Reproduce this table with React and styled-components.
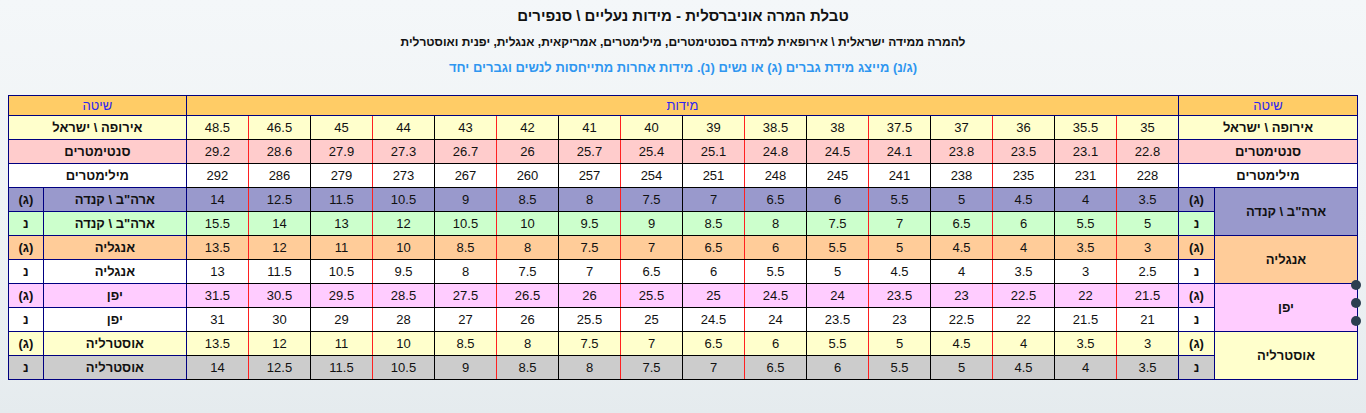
import React from "react"
import styled, { createGlobalStyle } from "styled-components"

const GlobalStyle = createGlobalStyle`
  html, body {
    margin: 0;
    padding: 0;
  }
  body {
    background: linear-gradient(180deg, #f4f7f9 0%, #eef2f4 60%, #e5ebee 100%);
    min-height: 413px;
    font-family: "Liberation Sans", Arial, sans-serif;
  }
`

const Page = styled.div`
  direction: rtl;
  padding: 6px 8px 0 8px;
  height: 407px;
  overflow: hidden;
`

const Title = styled.h1`
  margin: 0;
  font-size: 15px;
  line-height: 19px;
  font-weight: bold;
  text-align: center;
  color: #111;
`

const Subtitle = styled.p`
  margin: 8px 0 0;
  font-size: 12px;
  line-height: 18px;
  font-weight: bold;
  text-align: center;
  color: #111;
`

const Note = styled.p`
  margin: 8px 0 0;
  font-size: 13px;
  line-height: 18px;
  font-weight: bold;
  text-align: center;
  color: #2f96f0;
`

const Table = styled.table`
  margin-top: 18px;
  width: 1349px;
  border-collapse: collapse;
  table-layout: fixed;
  border: 1px solid #000080;
`

const Row = styled.tr`
  height: 24px;
  background: ${p => p.$bg || "#ffffff"};
`

const HeadRow = styled.tr`
  height: 20px;
  background: #ffcc66;
`

const HeadCell = styled.th`
  border: 1px solid #000080;
  padding: 0;
  font-size: 13px;
  font-weight: normal;
  color: #2b24f2;
  text-align: center;
`

const Label = styled.td`
  border: 1px solid #000080;
  padding: 0;
  font-size: 13px;
  font-weight: bold;
  color: #111;
  text-align: center;
  background: ${p => p.$bg || "transparent"};
`

const Gender = styled.td`
  border: 1px solid #000080;
  padding: 0;
  font-size: 13px;
  font-weight: bold;
  color: #111;
  text-align: center;
`

const Num = styled.td`
  padding: 0;
  font-size: 13px;
  color: #111;
  text-align: center;
  border-top: 1px solid #000;
  border-bottom: 1px solid #000;
  border-right: 1px solid ${p => p.$r};
  border-left: 1px solid ${p => p.$l};
`

const Dots = styled.div`
  position: fixed;
  right: 5px;
  top: 280px;
  display: flex;
  flex-direction: column;
  gap: 8px;
`

const Dot = styled.span`
  display: block;
  width: 10px;
  height: 10px;
  border-radius: 50%;
  background: #2c3e50;
`

const europe = ["35", "35.5", "36", "37", "37.5", "38", "38.5", "39", "40", "41", "42", "43", "44", "45", "46.5", "48.5"]
const cm = ["22.8", "23.1", "23.5", "23.8", "24.1", "24.5", "24.8", "25.1", "25.4", "25.7", "26", "26.7", "27.3", "27.9", "28.6", "29.2"]
const mm = ["228", "231", "235", "238", "241", "245", "248", "251", "254", "257", "260", "267", "273", "279", "286", "292"]

const groups = [
  {
    name: "ארה\"ב \\ קנדה",
    bg: "#9999cc",
    men: ["3.5", "4", "4.5", "5", "5.5", "6", "6.5", "7", "7.5", "8", "8.5", "9", "10.5", "11.5", "12.5", "14"],
    women: ["5", "5.5", "6", "6.5", "7", "7.5", "8", "8.5", "9", "9.5", "10", "10.5", "12", "13", "14", "15.5"],
    menBg: "#9999cc",
    womenBg: "#ccffcc",
  },
  {
    name: "אנגליה",
    bg: "#ffcc99",
    men: ["3", "3.5", "4", "4.5", "5", "5.5", "6", "6.5", "7", "7.5", "8", "8.5", "10", "11", "12", "13.5"],
    women: ["2.5", "3", "3.5", "4", "4.5", "5", "5.5", "6", "6.5", "7", "7.5", "8", "9.5", "10.5", "11.5", "13"],
    menBg: "#ffcc99",
    womenBg: "#ffffff",
  },
  {
    name: "יפן",
    bg: "#ffccff",
    men: ["21.5", "22", "22.5", "23", "23.5", "24", "24.5", "25", "25.5", "26", "26.5", "27.5", "28.5", "29.5", "30.5", "31.5"],
    women: ["21", "21.5", "22", "22.5", "23", "23.5", "24", "24.5", "25", "25.5", "26", "27", "28", "29", "30", "31"],
    menBg: "#ffccff",
    womenBg: "#ffffff",
  },
  {
    name: "אוסטרליה",
    bg: "#ffffcc",
    men: ["3", "3.5", "4", "4.5", "5", "5.5", "6", "6.5", "7", "7.5", "8", "8.5", "10", "11", "12", "13.5"],
    women: ["3.5", "4", "4.5", "5", "5.5", "6", "6.5", "7", "7.5", "8", "8.5", "9", "10.5", "11.5", "12.5", "14"],
    menBg: "#ffffcc",
    womenBg: "#cccccc",
  },
]

// column i counted from the right; red and black rules alternate
const sideColor = i => (i % 2 === 0 ? "#ff2020" : "#000")
const rightOf = i => (i === 0 ? "#000080" : sideColor(i - 1))
const leftOf = i => (i === 15 ? "#000080" : sideColor(i))

const Numbers = ({ values }) =>
  values.map((v, i) => (
    <Num key={i} $r={rightOf(i)} $l={leftOf(i)}>
      {v}
    </Num>
  ))

export default function App() {
  return (
    <>
      <GlobalStyle />
      <Page>
        <Title>טבלת המרה אוניברסלית - מידות נעליים \ סנפירים</Title>
        <Subtitle>
          להמרה ממידה ישראלית \ אירופאית למידה בסנטימטרים, מילימטרים, אמריקאית, אנגלית, יפנית ואוסטרלית
        </Subtitle>
        <Note>(ג/נ) מייצג מידת גברים (ג) או נשים (נ). מידות אחרות מתייחסות לנשים וגברים יחד</Note>
        <Table>
          <colgroup>
            <col style={{ width: 143 }} />
            <col style={{ width: 36 }} />
            {europe.map((_, i) => (
              <col key={i} style={{ width: 62 }} />
            ))}
            <col style={{ width: 143 }} />
            <col style={{ width: 35 }} />
          </colgroup>
          <tbody>
            <HeadRow>
              <HeadCell colSpan={2}>שיטה</HeadCell>
              <HeadCell colSpan={16}>מידות</HeadCell>
              <HeadCell colSpan={2}>שיטה</HeadCell>
            </HeadRow>
            <Row $bg="#ffffcc">
              <Label colSpan={2}>אירופה \ ישראל</Label>
              <Numbers values={europe} />
              <Label colSpan={2}>אירופה \ ישראל</Label>
            </Row>
            <Row $bg="#ffcccc">
              <Label colSpan={2}>סנטימטרים</Label>
              <Numbers values={cm} />
              <Label colSpan={2}>סנטימטרים</Label>
            </Row>
            <Row>
              <Label colSpan={2}>מילימטרים</Label>
              <Numbers values={mm} />
              <Label colSpan={2}>מילימטרים</Label>
            </Row>
            {groups.map(g => (
              <React.Fragment key={g.name}>
                <Row $bg={g.menBg}>
                  <Label rowSpan={2} $bg={g.bg}>
                    {g.name}
                  </Label>
                  <Gender>(ג)</Gender>
                  <Numbers values={g.men} />
                  <Label>{g.name}</Label>
                  <Gender>(ג)</Gender>
                </Row>
                <Row $bg={g.womenBg}>
                  <Gender>נ</Gender>
                  <Numbers values={g.women} />
                  <Label>{g.name}</Label>
                  <Gender>נ</Gender>
                </Row>
              </React.Fragment>
            ))}
          </tbody>
        </Table>
      </Page>
      <Dots>
        <Dot />
        <Dot />
        <Dot />
      </Dots>
    </>
  )
}
